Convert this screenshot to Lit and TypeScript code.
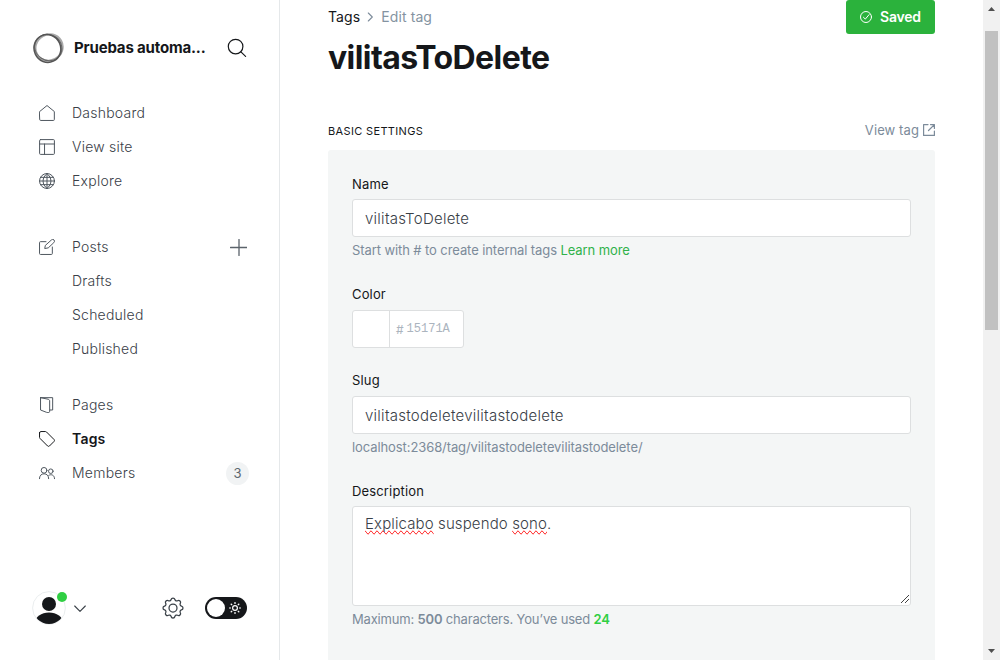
import { LitElement, html, css, svg, nothing } from "lit";
import { customElement, property } from "lit/decorators.js";

const icon = (size: number, body: unknown, cls = "") =>
  html`<svg class="icon ${cls}" width=${size} height=${size} viewBox="0 0 24 24">${body}</svg>`;

const ICONS: Record<string, unknown> = {
  home: svg`<path d="M1 9.8 12 .8l11 9v12a1.4 1.4 0 0 1-1.4 1.4H2.4A1.4 1.4 0 0 1 1 21.800z"/>`,
  site: svg`<rect x=".9" y=".9" width="22.200" height="22.200" rx="1.400"/><path d="M.9 7.500h22.200M8.300 7.500v15.600"/>`,
  globe: svg`<circle cx="12" cy="12" r="11.200"/><path d="M.8 12h22.400M12 .8v22.400M2.300 6.500h19.400M2.300 17.500h19.400M12 .8c-8 6.500-8 16 0 22.400M12 .8c8 6.500 8 16 0 22.400"/>`,
  posts: svg`<path d="M10.500 4H2.200A1.400 1.400 0 0 0 .8 5.400v16.400a1.400 1.400 0 0 0 1.400 1.400h16.400a1.400 1.400 0 0 0 1.400-1.400V12"/><path d="m13.300 13.400-4.700.9.900-4.700 9.200-8.200a2.500 2.500 0 0 1 3.800 3.800z"/>`,
  pages: svg`<path d="M2.300 1h18.200v18.500h-4M2.300 1v18.500l9 3.500c3 .8 4.700.5 4.700-1.500V6c0-1.500-1-2.300-2.500-2.700L2.300 1"/>`,
  tags: svg`<path d="M.8 2.800v6.700c0 .6.200 1.100.6 1.500l11.500 11.500c.8.800 2 .8 2.800 0l6.900-6.900c.8-.8.8-2 0-2.800L11.200 1.400c-.4-.4-.9-.6-1.500-.6H2.800a2 2 0 0 0-2 2z"/>`,
  members: svg`<circle cx="7.600" cy="8" r="4.300"/><circle cx="17.700" cy="9.300" r="3.400"/><path d="M.7 20.500c0-4.600 2.800-7.300 6.900-7.300s6.900 2.700 6.900 7.300M14.700 15.500c4-2.400 8.600-.3 8.600 5"/>`,
};

@customElement("nav-item")
export class NavItem extends LitElement {
  @property() icon = "";
  @property() label = "";
  @property({ type: Boolean }) active = false;
  static styles = css`
    :host { display: flex; align-items: center; height: 34px; color: #394047; font-size: 14px; letter-spacing: .23px; font-weight: 360; }
    .slot { width: 16px; height: 16px; margin: 0 17px 0 39px; display: flex; }
    .icon { fill: none; stroke: #4f575f; stroke-width: 1.5; stroke-linejoin: round; stroke-linecap: round; }
    .label { flex: 1; }
    .active { font-weight: 600; color: #15171a; letter-spacing: .2px; }
    .active-icon { stroke: #15171a; }
  `;
  render() {
    return html`<span class="slot">${this.icon ? icon(16, ICONS[this.icon], this.active ? "active-icon" : "") : nothing}</span>
      <span class="label ${this.active ? "active" : ""}">${this.label}</span><slot></slot>`;
  }
}

@customElement("app-root")
export class AppRoot extends LitElement {
  static styles = css`
    :host { display: flex; width: 1000px; height: 660px; overflow: hidden; background: #fff; color: #15171a; font-family: Inter, sans-serif; font-size: 14px; line-height: 20px; }
    * { box-sizing: border-box; }
    .icon { display: block; fill: none; stroke: currentColor; stroke-linecap: round; stroke-linejoin: round; }
    .sidebar { width: 280px; border-right: 1px solid #e5e8ea; display: flex; flex-direction: column; }
    .brand { display: flex; align-items: center; height: 32px; margin: 32px 32px 32px 32px; }
    .name { margin-left: 10px; width: 134px; font-size: 15px; font-weight: 700; letter-spacing: -.17px; white-space: nowrap; }
    .search { margin-left: 19px; }
    .group { display: flex; flex-direction: column; margin-bottom: 32px; }
    .group-tight { margin-bottom: 22px; }
    .plus { margin-right: 32px; color: #5b636b; }
    .badge { margin-right: 30px; width: 23px; height: 23px; border-radius: 12px; background: #f1f3f4; color: #5d6670; font-size: 13px; line-height: 23px; text-align: center; letter-spacing: 0; font-weight: 400; }
    .foot { margin-top: auto; height: 104px; padding: 34px 32px 0; display: flex; align-items: flex-start; }
    .user { width: 35px; height: 36px; flex: none; }
    .chev { margin: 15px 0 0 7px; color: #394047; }
    .gear { margin: 7px 0 0 76px; color: #394047; }
    .toggle { margin: 7px 0 0 21px; }
    .main { flex: 1; padding: 0 48px; }
    .top { display: flex; justify-content: space-between; height: 34px; }
    .crumbs { display: flex; align-items: center; height: 34px; letter-spacing: .1px; }
    .crumb-icon { margin: 0 7px; color: #7c8b9a; }
    .muted { color: #8493a1; }
    .saved { width: 89px; height: 34px; display: flex; align-items: center; padding-left: 14px; gap: 8px; border-radius: 3px; background: #2bb23c; color: #fff; font-weight: 600; letter-spacing: -.2px; }
    h1 { margin: 4px 0 0; height: 40px; font-size: 32px; line-height: 40px; font-weight: 700; letter-spacing: -.57px; }
    .section { display: flex; justify-content: space-between; margin-top: 42px; height: 30px; }
    .section-title { font-size: 11px; line-height: 22px; letter-spacing: .35px; }
    .view { display: flex; align-items: center; height: 20px; gap: 4px; font-size: 13px; color: #7c8b9a; letter-spacing: .1px; }
    .panel { height: 520px; padding: 24px; background: #f4f6f6; border-radius: 3px; font-size: 13px; }
    .field { margin-bottom: 23px; }
    .field-color { margin-bottom: 22px; }
    .label { height: 20px; margin-bottom: 5px; letter-spacing: .15px; }
    .label-low { margin-bottom: 6px; }
    .input { height: 38px; border: 1px solid #dddfe0; border-radius: 3px; background: #fff; padding: 0 12px; font-size: 15px; font-weight: 360; line-height: 37px; letter-spacing: .26px; color: #394047; }
    .help { height: 20px; margin-top: 3px; margin-bottom: 24px; color: #7c8b9a; letter-spacing: -.09px; white-space: nowrap; }
    .help-count { letter-spacing: -.18px; }
    .help b { font-weight: 600; }
    .link { color: #30b24a; }
    .color { display: flex; width: 112px; padding: 0; color: #abb4be; letter-spacing: 0; }
    .swatch { width: 37px; border-right: 1px solid #dddfe0; }
    .hash { margin-left: 6px; font-size: 12px; line-height: 38px; font-weight: 400; }
    .hex { margin-left: 3px; font-family: "Liberation Mono", monospace; font-size: 12px; line-height: 36px; font-weight: 400; }
    .area { height: 100px; padding: 7px 12px; line-height: 20px; letter-spacing: .12px; display: flex; justify-content: space-between; }
    .misspelt { text-decoration-line: spelling-error; }
    .grip { align-self: flex-end; margin: 0 -11px -6px 0; }
    .help .count { color: #30cf43; }
    .scroll { width: 17px; background: #f1f1f1; display: flex; flex-direction: column; align-items: center; }
    .thumb { width: 13px; height: 299px; margin: 20px 0 auto 0; background: #c1c1c1; }
    .up { margin-top: 7px; }
    .down { margin-bottom: 7px; }
  `;
  render() {
    const rays = [0, 45, 90, 135, 180, 225, 270, 315];
    return html`
      <div class="sidebar">
        <div class="brand">
          <svg width="32" height="32" viewBox="0 0 32 32" fill="none">
            <ellipse cx="17" cy="15.500" rx="13.800" ry="13" stroke="#aaa" stroke-width="2.200" transform="rotate(-30 17 15.500)"/>
            <ellipse cx="16.300" cy="15.500" rx="14" ry="12.800" stroke="#666" stroke-width="1" transform="rotate(35 16.300 15.500)"/>
            <ellipse cx="15.400" cy="16.500" rx="14" ry="13.300" stroke="#555" stroke-width="1.500" transform="rotate(65 15.400 16.500)"/>
          </svg>
          <span class="name">Pruebas automa...</span>
          <svg class="icon search" width="20" height="20" viewBox="0 0 20 20" stroke-width="1.200"><circle cx="8.600" cy="8.600" r="7.300"/><path d="m13.900 13.900 4.700 4.500"/></svg>
        </div>
        <div class="group">
          <nav-item icon="home" label="Dashboard"></nav-item>
          <nav-item icon="site" label="View site"></nav-item>
          <nav-item icon="globe" label="Explore"></nav-item>
        </div>
        <div class="group group-tight">
          <nav-item icon="posts" label="Posts"><svg class="icon plus" width="17" height="17" viewBox="0 0 17 17" stroke-width="1.300"><path d="M9 .5v16M.5 8.500h16.500"/></svg></nav-item>
          <nav-item label="Drafts"></nav-item>
          <nav-item label="Scheduled"></nav-item>
          <nav-item label="Published"></nav-item>
        </div>
        <div class="group">
          <nav-item icon="pages" label="Pages"></nav-item>
          <nav-item icon="tags" label="Tags" active></nav-item>
          <nav-item icon="members" label="Members"><span class="badge">3</span></nav-item>
        </div>
        <div class="foot">
          <svg class="user" viewBox="0 0 35 36">
            <defs><clipPath id="c"><circle cx="17" cy="18" r="16"/></clipPath></defs>
            <circle cx="17" cy="18" r="16.400" fill="#fff" stroke="#e5e8ea" stroke-width=".8"/>
            <g clip-path="url(#c)" fill="#15171a"><circle cx="17" cy="14" r="7"/><ellipse cx="17" cy="33" rx="14" ry="10.500"/></g>
            <circle cx="30" cy="7" r="5" fill="#30cf43"/>
          </svg>
          <svg class="icon chev" width="12" height="8" viewBox="0 0 12 8" stroke-width="1.100"><path d="m.7 1 5.300 5.300L11.300 1"/></svg>
          <svg class="icon gear" width="22" height="22" viewBox="0 0 22 22" stroke-width="1.250">
            <circle cx="11" cy="11" r="4"/>
            <path d="M9.100 2.500c.5-2 3.300-2 3.800 0 .3 1.300 1.600 1.800 2.700 1.200 1.700-1.100 3.800 1 2.700 2.700-.6 1.100-.1 2.400 1.200 2.700 2 .5 2 3.300 0 3.800-1.300.3-1.800 1.600-1.200 2.700 1.100 1.700-1 3.800-2.700 2.700-1.100-.6-2.400-.1-2.700 1.200-.5 2-3.300 2-3.800 0-.3-1.300-1.600-1.800-2.700-1.200-1.700 1.100-3.800-1-2.700-2.700.6-1.100.1-2.400-1.200-2.700-2-.5-2-3.300 0-3.800 1.300-.3 1.800-1.600 1.200-2.700-1.100-1.700 1-3.800 2.700-2.700 1.100.6 2.400.1 2.700-1.200z"/>
          </svg>
          <svg class="toggle" width="42" height="22" viewBox="0 0 42 22">
            <rect width="42" height="22" rx="11" fill="#15171a"/><circle cx="11" cy="11" r="9" fill="#fff"/>
            <g stroke="#fff" stroke-width="1.200" fill="none"><circle cx="30" cy="11" r="2.400"/>${rays.map((a) => svg`<path d="M30 5v2" transform="rotate(${a} 30 11)"/>`)}</g>
          </svg>
        </div>
      </div>
      <div class="main">
        <div class="top">
          <div class="crumbs"><span>Tags</span><svg class="icon crumb-icon" width="7" height="10" viewBox="0 0 7 10" stroke-width="1.100"><path d="M1.300 1l4 4-4 4"/></svg><span class="muted">Edit tag</span></div>
          <div class="saved"><svg class="icon" width="12" height="12" viewBox="0 0 12 12"><circle cx="6" cy="6" r="5.500"/><path d="m3.400 6.200 1.900 1.900 3.800-4.500"/></svg><span>Saved</span></div>
        </div>
        <h1>vilitasToDelete</h1>
        <div class="section">
          <span class="section-title">BASIC SETTINGS</span>
          <span class="view">View tag<svg class="icon" width="12" height="12" viewBox="0 0 12 12" stroke-width="1.200"><path d="M5 .6H.6v10.800h10.800V7M7.500.6h3.900v3.900M11.400.6 5.500 6.500"/></svg></span>
        </div>
        <div class="panel">
          <div class="field">
            <div class="label">Name</div><div class="input">vilitasToDelete</div>
            <div class="help">Start with # to create internal tags <span class="link">Learn more</span></div>
          </div>
          <div class="field field-color">
            <div class="label label-low">Color</div>
            <div class="input color"><span class="swatch"></span><span class="hash">#</span><span class="hex">15171A</span></div>
          </div>
          <div class="field">
            <div class="label label-low">Slug</div><div class="input">vilitastodeletevilitastodelete</div>
            <div class="help">localhost:2368/tag/vilitastodeletevilitastodelete/</div>
          </div>
          <div class="field">
            <div class="label">Description</div>
            <div class="input area"><span><span class="misspelt">Explicabo</span> suspendo <span class="misspelt">sono</span>.</span>
              <svg class="grip" width="9" height="9" viewBox="0 0 9 9" stroke="#444" shape-rendering="crispEdges"><path d="M.5 8.500 8.500.5M4.500 8.500l4-4"/></svg></div>
            <div class="help help-count">Maximum: <b>500</b> characters. You’ve used <b class="count">24</b></div>
          </div>
        </div>
      </div>
      <div class="scroll">
        <svg class="up" width="7" height="4" viewBox="0 0 7 4"><path d="M0 4 3.500 0 7 4z" fill="#505050"/></svg>
        <div class="thumb"></div>
        <svg class="down" width="7" height="4" viewBox="0 0 7 4"><path d="M0 0 3.500 4 7 0z" fill="#505050"/></svg>
      </div>`;
  }
}
